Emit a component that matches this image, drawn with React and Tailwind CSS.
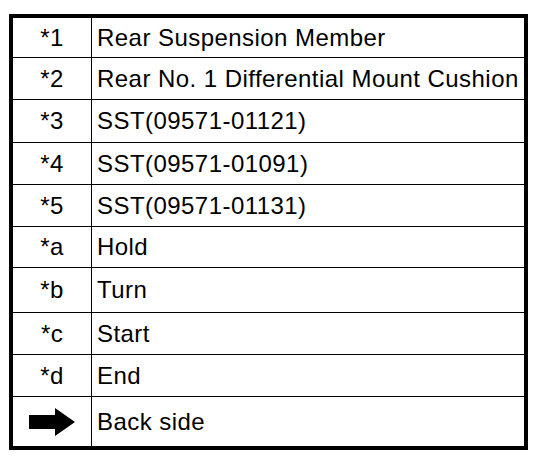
import React from "react";

// 图例表：编号 + 说明
const rows = [
  { key: "*1", label: "Rear Suspension Member", h: "h-[40px]" },
  { key: "*2", label: "Rear No. 1 Differential Mount Cushion", h: "h-[42px]" },
  { key: "*3", label: "SST(09571-01121)", h: "h-[43px]" },
  { key: "*4", label: "SST(09571-01091)", h: "h-[42px]" },
  { key: "*5", label: "SST(09571-01131)", h: "h-[42px]" },
  { key: "*a", label: "Hold", h: "h-[41px]" },
  { key: "*b", label: "Turn", h: "h-[45px]" },
  { key: "*c", label: "Start", h: "h-[42px]" },
  { key: "*d", label: "End", h: "h-[42px]" },
  { key: "arrow", label: "Back side", h: "h-[49px]" },
];

function Arrow() {
  return (
    <svg width="46" height="28" viewBox="0 0 46 28">
      <polygon points="0,7 26,7 26,0 46,14 26,28 26,21 0,21" fill="#000" />
    </svg>
  );
}

export default function App() {
  return (
    <div className="w-[542px] h-[462px] bg-white pt-[14px] pl-[9px]" style={{ fontFamily: '"Liberation Sans", Arial, sans-serif' }}>
      <div className="w-[519px] border-4 border-black text-black">
        {rows.map((r, i) => (
          <div
            key={r.key}
            className={`flex ${r.h} ${i < rows.length - 1 ? "border-b border-black" : ""}`}
          >
            <div className="w-[79px] shrink-0 border-r border-black flex items-center justify-center text-[24px] tracking-[0.45px]">
              {r.key === "arrow" ? <Arrow /> : r.key}
            </div>
            <div className="flex-1 flex items-center pl-[5px] text-[24px] tracking-[0.45px] whitespace-nowrap">
              {r.label}
            </div>
          </div>
        ))}
      </div>
    </div>
  );
}
